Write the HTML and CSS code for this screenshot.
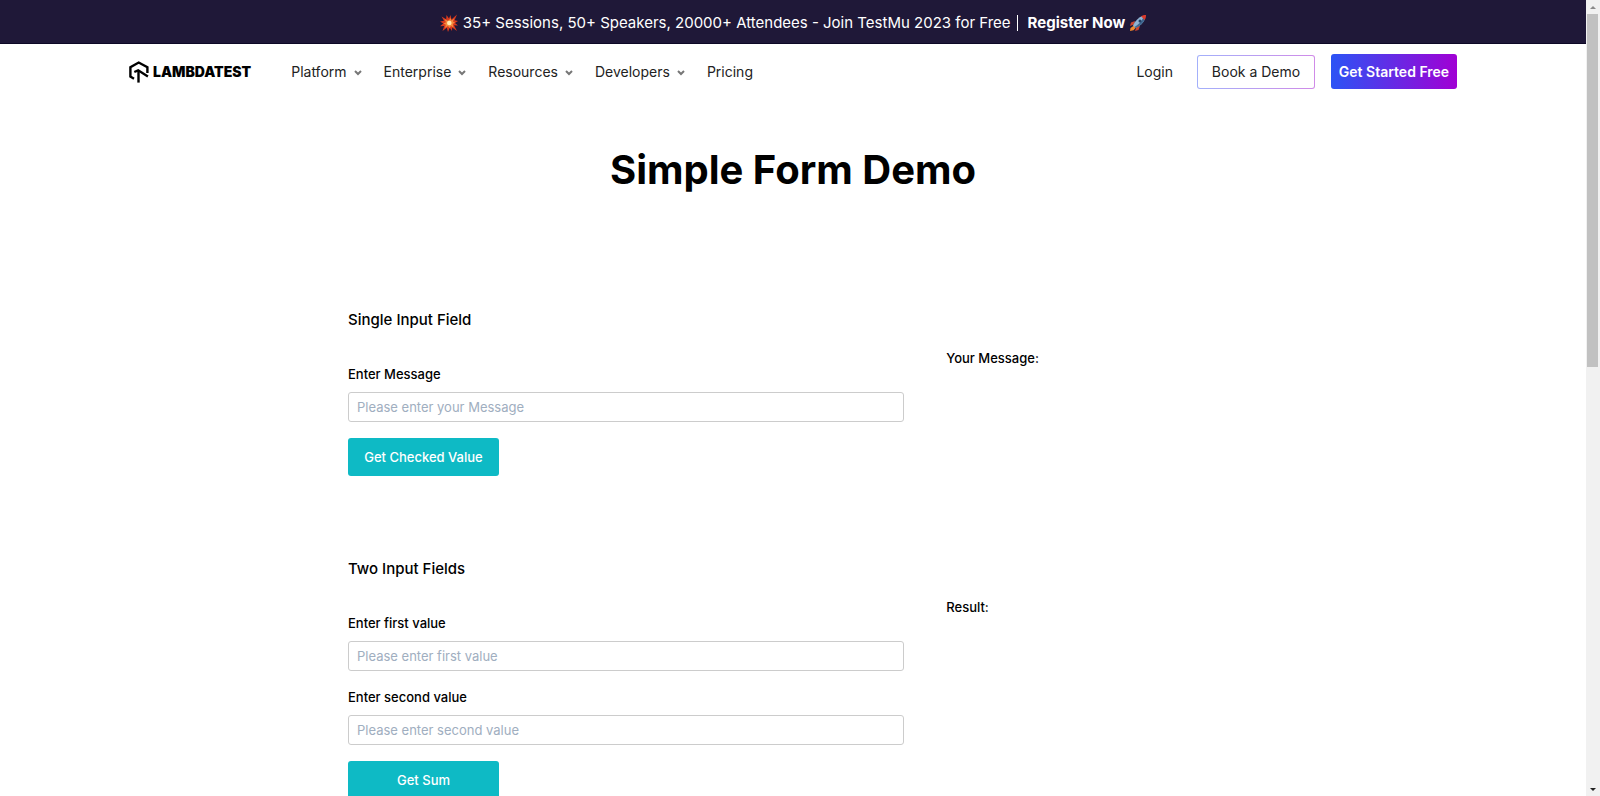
FILE: index.html
```
<!DOCTYPE html>
<html lang="en">
<head>
    <meta charset="UTF-8">
    <meta name="viewport" content="width=device-width, initial-scale=1">
    <title>Simple Form Demo</title>
    <link rel="stylesheet" href="styles.css">
</head>
<body>

<div class="page">
    <div class="banner">
        <svg class="emoji" viewBox="0 0 18 18" aria-hidden="true">
            <path fill="#d93a1e" d="M9 4.500 10.500 1l1 4.500L17 .500l-2.500 5.800 3.500.700-3 2 3 2.500-4-.300 3 5.800-4.800-3.500-.200 3.500-2.200-3.200L8 18l-1.200-4.300L2.500 17l1.700-5L0 12.200l3.300-2.700L0 7.500l4-.700L1.500 2.500l4.700 2.700L6.500 1z"/>
            <path fill="#f58a3c" d="m9 6 1.800-2 .5 2.500 3-2-1.500 3L15 8.500 12.800 10l.7 3.500L11 12l-1.500 2L8 12l-3 2 .8-3.200L3.500 9.500 6 8.200 4.500 5l3 1.700z"/>
            <circle fill="#ffe9b0" cx="9.300" cy="9" r="2.300"/>
        </svg>
        <span>35+ Sessions, 50+ Speakers, 20000+ Attendees - Join TestMu 2023 for Free</span>
        <span class="divider"></span>
        <a href="#">Register Now</a>
        <svg class="emoji rocket" viewBox="0 0 16 16" aria-hidden="true">
            <path fill="#c8442f" d="m5 6-4 1.500L0 11l4-1.500zM10 11l-1.500 4L5 16l1.500-4z"/>
            <path fill="#f0892c" d="M4 10.500.500 13 0 16l3.500-.800L6 12.500z"/>
            <path fill="#8fb3d3" d="M3 10.500C5 6 8.500 2.500 12 1l3 3c-1.500 4-5 7-9.500 9z"/>
            <path fill="#3e6790" d="M5.500 13c4.500-2 8-5 9.500-9l-1.500-1.500C11 7 8 10 4.500 12z"/>
            <path fill="#dd3b2b" d="M16 0c-2 0-3.500.300-5 1.300L14.700 5C15.700 3.500 16 2 16 0z"/>
            <circle fill="#243f63" cx="10" cy="6" r="1.500"/>
        </svg>
    </div>

    <header class="header">
        <a class="logo" href="#">
            <svg viewBox="0 0 20 22" fill="none" stroke="#000" stroke-width="2.400" aria-hidden="true">
                <path d="M5 17.800 1.400 15.600V6.200L9.700 1.500 18.400 6.200V12"/>
                <path d="M5.300 11 9.200 9.300 18.900 15.400"/>
                <path d="M9.500 10V21.600"/>
            </svg>
            <span>LAMBDATEST</span>
        </a>
        <nav class="nav">
            <a href="#">Platform <svg class="caret" viewBox="0 0 8 6"><path d="m1 1 3 3 3-3"/></svg></a>
            <a href="#">Enterprise <svg class="caret" viewBox="0 0 8 6"><path d="m1 1 3 3 3-3"/></svg></a>
            <a href="#">Resources <svg class="caret" viewBox="0 0 8 6"><path d="m1 1 3 3 3-3"/></svg></a>
            <a href="#">Developers <svg class="caret" viewBox="0 0 8 6"><path d="m1 1 3 3 3-3"/></svg></a>
            <a href="#">Pricing</a>
        </nav>
        <div class="actions">
            <a class="login" href="#">Login</a>
            <button class="demo" type="button">Book a Demo</button>
            <button class="start" type="button">Get Started Free</button>
        </div>
    </header>

    <main>
        <h1>Simple Form Demo</h1>

        <section class="card">
            <h2>Single Input Field</h2>
            <div class="columns">
                <form class="form">
                    <label for="user-message">Enter Message</label>
                    <input type="text" id="user-message" placeholder="Please enter your Message">
                    <button type="button" id="showInput">Get Checked Value</button>
                </form>
                <div class="output">
                    <span>Your Message: </span>
                    <span id="message"></span>
                </div>
            </div>
        </section>

        <section class="card">
            <h2>Two Input Fields</h2>
            <div class="columns">
                <form class="form">
                    <label for="sum1">Enter first value</label>
                    <input type="text" id="sum1" placeholder="Please enter first value">
                    <label for="sum2">Enter second value</label>
                    <input type="text" id="sum2" placeholder="Please enter second value">
                    <button type="button" id="getSum">Get Sum</button>
                </form>
                <div class="output">
                    <span>Result: </span>
                    <span id="addmessage"></span>
                </div>
            </div>
        </section>
    </main>
</div>

<div class="scrollbar" aria-hidden="true">
    <svg viewBox="0 0 14 14"><path fill="#8a8a8a" d="m4 9 3-3 3 3z"/></svg>
    <div class="track"><div class="thumb"></div></div>
    <svg viewBox="0 0 14 14"><path fill="#222" d="m4 6 3 3 3-3z"/></svg>
</div>

<script>
    document.getElementById('showInput').addEventListener('click', function () {
        document.getElementById('message').textContent = document.getElementById('user-message').value;
    });
    document.getElementById('getSum').addEventListener('click', function () {
        const a = parseInt(document.getElementById('sum1').value);
        const b = parseInt(document.getElementById('sum2').value);
        document.getElementById('addmessage').textContent = a + b;
    });
</script>
</body>
</html>
```

FILE: styles.css
```
* {
    box-sizing: border-box;
}
body {
    margin: 0;
    display: flex;
    height: 100vh;
    overflow: hidden;
    background: #fff;
    color: #000;
    font-family: Inter, "Liberation Sans", sans-serif;
    font-size: 14px;
}
a {
    color: inherit;
    text-decoration: none;
}
button,
input {
    font: inherit;
}
.page {
    flex: 1;
    min-width: 0;
    overflow: hidden;
}

/* top banner */
.banner {
    display: flex;
    align-items: center;
    justify-content: center;
    height: 44px;
    padding-top: 2px;
    background: #1f1838;
    border-bottom: 1px solid #0d0826;
    color: #fff;
    font-size: 15px;
}
.banner a {
    font-weight: 700;
}
.emoji {
    width: 18px;
    height: 18px;
    margin-right: 5px;
}
.rocket {
    width: 16px;
    height: 16px;
    margin: 0 0 0 5px;
}
.divider {
    width: 1px;
    height: 16px;
    margin: 0 10px 0 6px;
    background: #fff;
}

/* header */
.header {
    display: flex;
    align-items: center;
    max-width: 1328px;
    height: 55px;
    margin: 0 auto;
    color: #222;
}
.logo {
    display: flex;
    align-items: center;
    gap: 4px;
    color: #000;
    font-size: 14px;
    font-weight: 900;
}
.logo svg {
    width: 20px;
    height: 22px;
}
.nav {
    display: flex;
    gap: 22px;
    margin-left: 40px;
}
.nav a {
    display: flex;
    align-items: center;
    gap: 7px;
}
.caret {
    width: 8px;
    height: 6px;
    margin-top: 3px;
    fill: none;
    stroke: #777;
    stroke-width: 2;
}
.actions {
    display: flex;
    align-items: center;
    margin-left: auto;
}
.actions button {
    border-radius: 3px;
}
.demo {
    width: 118px;
    height: 34px;
    margin: 0 16px 0 24px;
    padding: 0;
    border: 1px solid transparent;
    background: linear-gradient(#fff, #fff) padding-box, linear-gradient(90deg, #a3b0fb, #d08be8) border-box;
    color: #222;
}
.start {
    width: 126px;
    height: 35px;
    padding: 0;
    border: 0;
    background: linear-gradient(90deg, #2b54f5, #a100d4);
    color: #fff;
    font-weight: 600;
}

/* forms */
h1 {
    margin: 46px 0 96px;
    font-size: 40px;
    font-weight: 700;
    line-height: 50px;
    text-align: center;
}
.card {
    max-width: 890px;
    margin: 0 auto 64px;
    padding-top: 17px;
}
h2 {
    margin: 0 0 16px;
    font-size: 15px;
    font-weight: 500;
    line-height: 24px;
}
.columns {
    display: grid;
    grid-template-columns: 5fr 3fr;
}
.form {
    padding-top: 16px;
}
.form label {
    display: block;
    margin-bottom: 8px;
    font-size: 13px;
    font-weight: 500;
    line-height: 20px;
}
.form input {
    display: block;
    width: 100%;
    height: 30px;
    margin-bottom: 16px;
    padding: 0 8px;
    border: 1px solid #ccc;
    border-radius: 3px;
    background: #fff;
    font-size: 13px;
}
.form input::placeholder {
    color: #a0aec0;
}
.form button {
    width: 151px;
    height: 38px;
    padding: 0;
    border: 0;
    border-radius: 3px;
    background: #0ebac5;
    color: #fff;
    font-size: 13px;
    font-weight: 500;
}
.output {
    padding-left: 42px;
    font-size: 13px;
    font-weight: 500;
    line-height: 20px;
}

/* scrollbar */
.scrollbar {
    display: flex;
    flex-direction: column;
    width: 14px;
    background: #f1f1f1;
}
.scrollbar svg {
    width: 14px;
    height: 14px;
}
.track {
    flex: 1;
    padding: 0 2px 0 1px;
}
.thumb {
    height: 46%;
    background: #c1c1c1;
}
```
